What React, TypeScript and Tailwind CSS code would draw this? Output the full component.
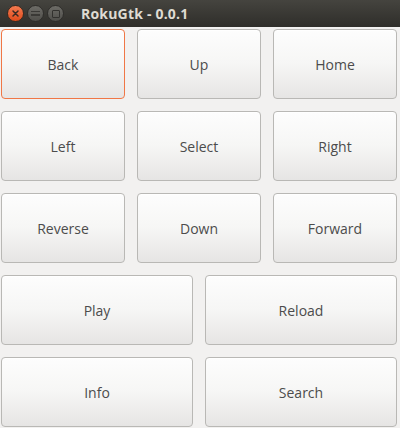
import React from 'react';

const topKeys = ['Back', 'Up', 'Home', 'Left', 'Select', 'Right', 'Reverse', 'Down', 'Forward'];
const bottomKeys = ['Play', 'Reload', 'Info', 'Search'];

const btnBase =
  'h-[70px] rounded-[4px] border bg-gradient-to-b from-[#fdfdfd] via-[#f6f6f5] to-[#e6e5e4] text-[14px] text-[#4c4c4c] shadow-[inset_0_1px_0_#ffffff]';

const TitleBar: React.FC = () => (
  <div className="h-[27px] flex items-center bg-gradient-to-b from-[#45443f] to-[#2f2e2a] px-[7px]">
    <div className="flex items-center gap-[3px]">
      {/* close */}
      <div className="w-[17px] h-[17px] rounded-full bg-gradient-to-b from-[#f47a4f] to-[#df4a17] border border-[#3a2a20] flex items-center justify-center">
        <svg width="9" height="9" viewBox="0 0 9 9">
          <path d="M2 2 L7 7 M7 2 L2 7" stroke="#3b2a22" strokeWidth="1.5" strokeLinecap="round" />
        </svg>
      </div>
      {/* minimize */}
      <div className="w-[17px] h-[17px] rounded-full bg-gradient-to-b from-[#6d6c67] to-[#4f4e4a] border border-[#2f2e2b] flex items-center justify-center">
        <div className="w-[9px] h-[5px] border-b-2 border-t border-[#3a3936]" />
      </div>
      {/* maximize */}
      <div className="w-[17px] h-[17px] rounded-full bg-gradient-to-b from-[#6d6c67] to-[#4f4e4a] border border-[#2f2e2b] flex items-center justify-center">
        <div className="w-[8px] h-[8px] border-[1.5px] border-[#32312e] rounded-[1px]" />
      </div>
    </div>
    <span className="ml-[17px] text-[14px] font-bold text-[#dfdbd2] tracking-[0.2px] font-['Open_Sans',sans-serif]">
      RokuGtk - 0.0.1
    </span>
  </div>
);

export default function App() {
  return (
    <div className="w-[400px] h-[428px] bg-[#f2f1f0] font-['Open_Sans',sans-serif] overflow-hidden">
      <TitleBar />
      <div className="grid grid-cols-6 gap-[12px] pl-[1px] pr-[3px] pt-[2px]">
        {topKeys.map((k, i) => (
          <button
            key={k}
            className={`${btnBase} col-span-2 ${i === 0 ? 'border-[#f07746]' : 'border-[#b9b8b5]'}`}
          >
            {k}
          </button>
        ))}
        {bottomKeys.map((k) => (
          <button key={k} className={`${btnBase} col-span-3 border-[#b9b8b5]`}>
            {k}
          </button>
        ))}
      </div>
    </div>
  );
}
